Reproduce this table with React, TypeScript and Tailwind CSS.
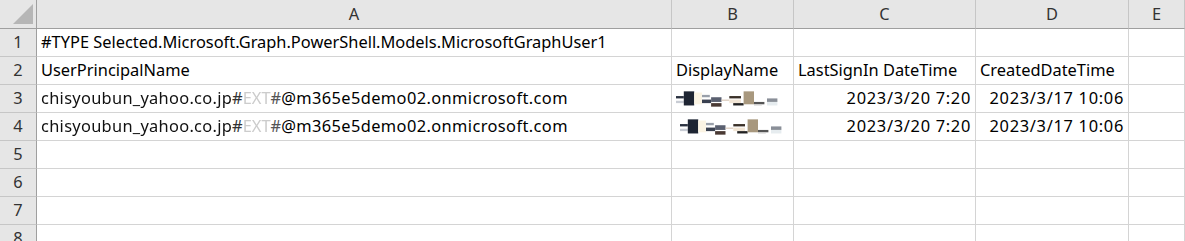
import React from 'react';

const cols = ['A', 'B', 'C', 'D', 'E'];
const cell = 'border-r border-b border-[#d4d4d4] h-[28px] flex items-center px-[4px] whitespace-nowrap overflow-visible';
const head = 'bg-[#e6e6e6] border-r border-b border-[#c6c6c6] flex items-center justify-center text-[#333]';

function Mosaic({ shift = 0 }: { shift?: number }) {
  return (
    <svg
      width="104"
      height="20"
      viewBox="0 0 80 17"
      preserveAspectRatio="none"
      className="shrink-0"
      style={{ marginLeft: shift }}
    >
      <rect x="0" y="6" width="6" height="2" fill="#2a3140" />
      <rect x="0" y="10" width="6" height="2" fill="#c8ccd4" />
      <rect x="6" y="2" width="8" height="12" fill="#1e2533" />
      <rect x="14" y="3" width="6" height="10" fill="#fbf4e4" />
      <rect x="20" y="5" width="6" height="2" fill="#9aa0aa" />
      <rect x="20" y="9" width="7" height="3" fill="#3a4150" />
      <rect x="27" y="7" width="8" height="4" fill="#5a6070" />
      <rect x="27" y="12" width="8" height="3" fill="#4a3a34" />
      <rect x="35" y="9" width="6" height="1" fill="#d8c8b8" />
      <rect x="41" y="6" width="9" height="2" fill="#3a3028" />
      <rect x="41" y="9" width="9" height="3" fill="#f2e6d6" />
      <rect x="44" y="12" width="8" height="2" fill="#222" />
      <rect x="52" y="2" width="8" height="11" fill="#a8987e" />
      <rect x="60" y="11" width="8" height="2" fill="#555" />
      <rect x="60" y="13" width="6" height="1" fill="#ccc" />
      <rect x="70" y="8" width="8" height="3" fill="#8a8f98" />
      <rect x="70" y="11" width="8" height="3" fill="#e6ecef" />
    </svg>
  );
}

function EmailCell() {
  return (
    <span>
      <span className="blur-[0.7px] text-[#111] tracking-[0.3px]">chisyoubun_yahoo.co.jp</span>
      <span className="text-[#333]">#</span>
      <span className="text-[#ccc] blur-[0.6px]">EXT</span>
      <span className="text-[#555]">#</span>
      <span className="tracking-[0.4px]">@m365e5demo02.onmicrosoft.com</span>
    </span>
  );
}

export default function App() {
  const rows: React.ReactNode[][] = [
    ['#TYPE Selected.Microsoft.Graph.PowerShell.Models.MicrosoftGraphUser1', '', '', '', ''],
    ['UserPrincipalName', 'DisplayName', 'LastSignIn DateTime', 'CreatedDateTime', ''],
    [<EmailCell key="e" />, <Mosaic key="m" />, '2023/3/20 7:20', '2023/3/17 10:06', ''],
    [<EmailCell key="e" />, <Mosaic key="m" shift={4} />, '2023/3/20 7:20', '2023/3/17 10:06', ''],
    ['', '', '', '', ''],
    ['', '', '', '', ''],
    ['', '', '', '', ''],
    ['', '', '', '', ''],
  ];
  return (
    <div
      className="w-[1185px] h-[241px] overflow-hidden bg-white text-[16.4px] text-black"
      style={{ fontFamily: '"Noto Sans", "Open Sans", sans-serif' }}
    >
      <div className="grid grid-cols-[37px_635px_122px_182px_153px_1fr]">
        <div className="bg-[#e6e6e6] border-r border-b border-[#9f9f9f] h-[29px] relative">
          <div className="absolute right-[3px] bottom-[4px] w-0 h-0 border-l-[20px] border-l-transparent border-b-[20px] border-b-[#b6b6b6]" />
        </div>
        {cols.map((c) => (
          <div key={c} className={`${head} h-[29px] border-b-[#9f9f9f]`}>
            {c}
          </div>
        ))}
        {rows.map((r, i) => (
          <React.Fragment key={i}>
            <div className="bg-[#e6e6e6] border-r border-b border-r-[#9f9f9f] border-b-[#c6c6c6] h-[28px] flex items-center justify-center text-[#333]">
              {i + 1}
            </div>
            {r.map((v, j) => (
              <div
                key={j}
                className={`${cell} ${i >= 2 && (j === 2 || j === 3) ? 'justify-end tracking-[0.7px]' : ''}`}
              >
                {v}
              </div>
            ))}
          </React.Fragment>
        ))}
      </div>
    </div>
  );
}
